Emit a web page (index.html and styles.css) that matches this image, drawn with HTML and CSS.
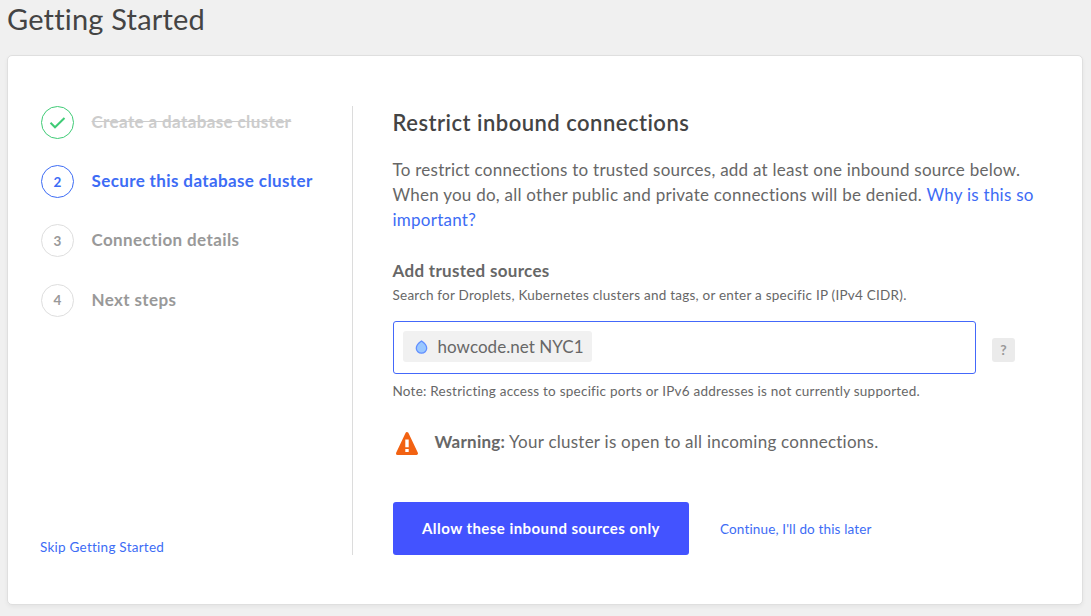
FILE: index.html
```html
<!DOCTYPE html>
<html lang="en">
<head>
    <meta charset="UTF-8">
    <meta name="viewport" content="width=device-width, initial-scale=1.0">
    <title>Getting Started</title>
    <link rel="stylesheet" href="styles.css">
</head>
<body>
    <h1 class="page-title">Getting Started</h1>

    <div class="card">
        <div class="sidebar">
            <ol class="steps">
                <li class="step done">
                    <span class="circle">
                        <svg width="17" height="14" viewBox="0 0 17 14" fill="none" stroke="#3fcb76" stroke-width="2"><path d="M1.5 6.8 L6 11.3 L15.5 2"/></svg>
                    </span>
                    <span class="step-name">Create a database cluster</span>
                </li>
                <li class="step active">
                    <span class="circle">2</span>
                    <span class="step-name">Secure this database cluster</span>
                </li>
                <li class="step">
                    <span class="circle">3</span>
                    <span class="step-name">Connection details</span>
                </li>
                <li class="step">
                    <span class="circle">4</span>
                    <span class="step-name">Next steps</span>
                </li>
            </ol>
            <a href="#" class="skip">Skip Getting Started</a>
        </div>

        <div class="content">
            <h2>Restrict inbound connections</h2>
            <p class="intro">To restrict connections to trusted sources, add at least one inbound source below.<br>
            When you do, all other public and private connections will be denied. <a href="#">Why is this so<br>important?</a></p>

            <h3>Add trusted sources</h3>
            <p class="hint search-hint">Search for Droplets, Kubernetes clusters and tags, or enter a specific IP (IPv4 CIDR).</p>
            <div class="source-row">
                <div class="source-input">
                    <span class="tag">
                        <svg width="13" height="14" viewBox="0 0 13 14"><path d="M6.5 1 C8 2 11.7 4.8 11.7 8.2 A5.2 5 0 0 1 1.3 8.2 C1.3 4.8 5 2 6.5 1Z" fill="#99c7ff" stroke="#628fff" stroke-width="1.3"/></svg>
                        <span class="tag-name">howcode.net NYC1</span>
                    </span>
                </div>
                <span class="help">?</span>
            </div>
            <p class="hint note">Note: Restricting access to specific ports or IPv6 addresses is not currently supported.</p>

            <div class="warning">
                <svg width="24" height="25" viewBox="0 0 24 25">
                    <path d="M12 2.5 L21.5 22.5 H2.5Z" fill="#f26212" stroke="#f26212" stroke-width="3" stroke-linejoin="round"/>
                    <path d="M10.3 8.5 H13.7 V16.2 H10.3Z M10.3 18 H13.7 V21 H10.3Z" fill="#fff"/>
                </svg>
                <p><strong>Warning:</strong> Your cluster is open to all incoming connections.</p>
            </div>

            <div class="actions">
                <button class="allow">Allow these inbound sources only</button>
                <a href="#" class="later">Continue, I'll do this later</a>
            </div>
        </div>
    </div>
</body>
</html>
```
FILE: styles.css
```css
* {
    margin: 0;
    padding: 0;
    box-sizing: border-box;
}
body {
    background: #f0f0f0;
    font-family: Lato, sans-serif;
    font-size: 17px;
    letter-spacing: 0.25px;
    color: #676767;
    padding: 0 8px 0 7px;
    height: 616px;
    overflow: hidden;
}
a {
    color: #3d6cf5;
    text-decoration: none;
}
.page-title {
    height: 55px;
    line-height: 37px;
    font-size: 29px;
    font-weight: 400;
    color: #444;
    letter-spacing: 0.2px;
}
.card {
    display: flex;
    height: 550px;
    padding: 50px 32px 49px;
    background: #fff;
    border: 1px solid #dfdfdf;
    border-radius: 5px;
    box-shadow: 0 2px 4px rgba(0, 0, 0, 0.05);
}
.sidebar {
    display: flex;
    flex-direction: column;
    justify-content: space-between;
    width: 313px;
    border-right: 1px solid #dcdcdc;
}
.steps {
    display: flex;
    flex-direction: column;
    gap: 26.2px;
    padding-left: 1px;
    list-style: none;
}
.step {
    display: flex;
    align-items: center;
    gap: 17.5px;
    height: 33px;
    color: #999;
    font-weight: 700;
    letter-spacing: 0.38px;
    white-space: nowrap;
}
.step-name {
    margin-top: -2px;
}
.circle {
    display: flex;
    align-items: center;
    justify-content: center;
    width: 33px;
    height: 33px;
    border: 1px solid #dedede;
    border-radius: 50%;
    font-size: 13.5px;
    letter-spacing: 0;
}
.done .circle {
    border-color: #3fcb76;
}
.done .step-name {
    color: #ccc;
    text-decoration: line-through;
}
.active {
    color: #3d6cf5;
}
.active .circle {
    border-color: #3d6cf5;
}
.skip {
    font-size: 13.5px;
    line-height: 15px;
}
.content {
    flex: 1;
    padding-left: 39.5px;
    white-space: nowrap;
}
h2 {
    line-height: 34px;
    font-size: 22px;
    font-weight: 600;
    color: #444;
    letter-spacing: 0.48px;
}
.intro {
    margin-top: 17px;
    line-height: 25px;
}
h3 {
    margin-top: 26px;
    line-height: 25px;
    font-size: 17px;
    font-weight: 700;
    letter-spacing: 0.3px;
}
.hint {
    font-size: 13.5px;
    line-height: 20px;
    letter-spacing: 0.24px;
}
.search-hint {
    margin-top: 2px;
}
.source-row {
    display: flex;
    align-items: center;
    gap: 16px;
    margin: 16px 0 0 0.5px;
}
.source-input {
    width: 583px;
    height: 53px;
    padding: 9px;
    border: 1px solid #4468fa;
    border-radius: 3px;
}
.tag {
    display: flex;
    align-items: center;
    gap: 9.5px;
    width: 189px;
    height: 31px;
    padding: 0 0 1px 12px;
    background: #f1f1f1;
    border-radius: 3px;
    letter-spacing: 0.05px;
}
.tag svg {
    margin-top: 2px;
}
.help {
    width: 23px;
    height: 24px;
    margin-top: 5px;
    line-height: 24px;
    text-align: center;
    font-size: 14px;
    font-weight: 700;
    color: #999;
    background: #ebebeb;
    border-radius: 3px;
}
.note {
    margin-top: 7px;
}
.warning {
    display: flex;
    gap: 16px;
    margin: 28px 0 0 2px;
}
.warning svg {
    margin-top: 2px;
}
.warning p {
    line-height: 25px;
}
.actions {
    display: flex;
    align-items: center;
    gap: 31px;
    margin: 46px 0 0 0.5px;
}
.allow {
    width: 296px;
    height: 53px;
    padding-bottom: 1px;
    border: none;
    border-radius: 3px;
    background: #4353ff;
    color: #fff;
    font-family: inherit;
    font-size: 15px;
    font-weight: 700;
    letter-spacing: 0.45px;
}
.later {
    font-size: 13.5px;
    letter-spacing: 0.15px;
}
```
